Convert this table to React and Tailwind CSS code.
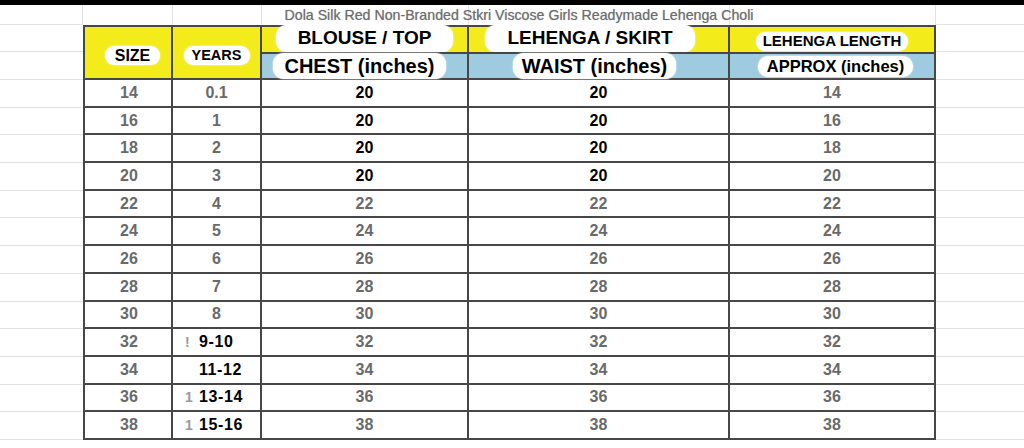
import React from "react";

const rows = [
  ["14", "0.1", "20", "20", "14"],
  ["16", "1", "20", "20", "16"],
  ["18", "2", "20", "20", "18"],
  ["20", "3", "20", "20", "20"],
  ["22", "4", "22", "22", "22"],
  ["24", "5", "24", "24", "24"],
  ["26", "6", "26", "26", "26"],
  ["28", "7", "28", "28", "28"],
  ["30", "8", "30", "30", "30"],
  ["32", "9-10", "32", "32", "32"],
  ["34", "11-12", "34", "34", "34"],
  ["36", "13-14", "36", "36", "36"],
  ["38", "15-16", "38", "38", "38"],
];

const gray = "text-[16px] font-bold text-[#6a6a6a]";
const black = "text-[16px] font-bold text-black";

function YearsCell({ v, i }) {
  if (i < 9) {
    return <span className={gray}>{v}</span>;
  }
  const rem = i === 9 ? "!" : i === 10 ? "" : "1";
  return (
    <div className="flex h-full w-full items-center pl-[12px]">
      <span className="w-[10px] text-[14px] font-bold text-[#9a9a9a]">{rem}</span>
      <span className="flex h-[21px] items-center rounded-[9px] bg-white px-[4px] text-[16px] font-bold tracking-[0.6px] text-black shadow-[0_0_2px_#fff]">
        {v}
      </span>
    </div>
  );
}

function DataRow({ r, i }) {
  const cell = "flex h-full items-center justify-center border-r-2 border-b-2 border-[#474747]";
  const boldRow = i < 4;
  return (
    <div className="flex h-[27.7px]">
      <div className="w-[83px] border-b border-[#e3e3e3]" />
      <div className={`${cell} w-[90px] border-l-2 pl-[2px]`}>
        <span className={gray}>{r[0]}</span>
      </div>
      <div className={`${cell} w-[89px]`}>
        <YearsCell v={r[1]} i={i} />
      </div>
      <div className={`${cell} w-[207px]`}>
        <span className={boldRow ? black : gray}>{r[2]}</span>
      </div>
      <div className={`${cell} w-[261px]`}>
        <span className={boldRow ? black : gray}>{r[3]}</span>
      </div>
      <div className={`${cell} w-[206px]`}>
        <span className={gray}>{r[4]}</span>
      </div>
      <div className="flex-1 border-b border-[#e3e3e3]" />
    </div>
  );
}

export default function App() {
  const light = "h-full border-r border-[#e3e3e3]";
  const yellow = "bg-[#f3ec1a]";
  const blue = "bg-[#9ecbdf]";
  const pill = "flex items-center justify-center rounded-[11px] bg-white font-bold text-black shadow-[0_0_2px_#fff]";
  return (
    <div
      className="h-[448px] w-[1024px] overflow-hidden bg-white"
      style={{ fontFamily: '"Liberation Sans", Arial, sans-serif' }}
    >
      <div className="h-[5px] bg-black" />
      {/* title row */}
      <div className="relative flex h-[20px]">
        <div className={`${light} w-[83px] border-b`} />
        <div className={`${light} w-[90px]`} />
        <div className={`${light} w-[89px]`} />
        <div className={`${light} w-[207px]`} />
        <div className={`${light} w-[261px]`} />
        <div className={`${light} w-[206px]`} />
        <div className="h-full flex-1 border-b border-[#e3e3e3]" />
        <div className="absolute left-0 top-[0px] flex w-full justify-center pl-[14px]">
          <span className="text-[14.2px] leading-[20px] text-[#6e6e6e] [text-shadow:0_0_1px_#aaa]">
            Dola Silk Red Non-Branded Stkri Viscose Girls Readymade Lehenga Choli
          </span>
        </div>
      </div>
      {/* header */}
      <div className="flex h-[55px]">
        <div className="flex w-[83px] flex-col">
          <div className="h-[27px] border-b border-[#e3e3e3]" />
          <div className="h-[28px] border-b border-[#e3e3e3]" />
        </div>
        <div className={`flex w-[90px] items-center justify-center border-2 border-[#474747] pt-[6px] pl-[9px] ${yellow}`}>
          <span className={`${pill} h-[19px] w-[55px] rounded-[8px] text-[16px]`}>SIZE</span>
        </div>
        <div className={`flex w-[89px] items-center justify-center border-y-2 border-r-2 border-[#474747] pt-[6px] ${yellow}`}>
          <span className={`${pill} h-[19px] w-[66px] rounded-[8px] text-[14.5px]`}>YEARS</span>
        </div>
        <div className="flex w-[207px] flex-col border-y-2 border-r-2 border-[#474747]">
          <div className={`flex h-[25px] items-start pl-[14px] ${yellow}`}>
            <span className={`${pill} -mt-[2px] h-[27px] w-[177px] text-[19px]`}>BLOUSE / TOP</span>
          </div>
          <div className={`flex h-[26px] items-center border-t-2 border-[#474747] pl-[11px] ${blue}`}>
            <span className={`${pill} h-[26px] w-[173px] text-[20px]`}>CHEST (inches)</span>
          </div>
        </div>
        <div className="flex w-[261px] flex-col border-y-2 border-r-2 border-[#474747]">
          <div className={`flex h-[25px] items-start pl-[16px] ${yellow}`}>
            <span className={`${pill} -mt-[2px] h-[27px] w-[210px] text-[19px]`}>LEHENGA / SKIRT</span>
          </div>
          <div className={`flex h-[26px] items-center border-t-2 border-[#474747] pl-[44px] ${blue}`}>
            <span className={`${pill} h-[26px] w-[163px] text-[20px]`}>WAIST (inches)</span>
          </div>
        </div>
        <div className="flex w-[206px] flex-col border-y-2 border-r-2 border-[#474747]">
          <div className={`flex h-[25px] items-center pl-[26px] pt-[3px] ${yellow}`}>
            <span className={`${pill} h-[19px] w-[152px] rounded-[9px] text-[15px]`}>LEHENGA LENGTH</span>
          </div>
          <div className={`flex h-[26px] items-center border-t-2 border-[#474747] pl-[28px] ${blue}`}>
            <span className={`${pill} h-[21px] w-[155px] rounded-[9px] text-[16.5px]`}>APPROX (inches)</span>
          </div>
        </div>
        <div className="flex flex-1 flex-col">
          <div className="h-[27px] border-b border-[#e3e3e3]" />
          <div className="h-[28px] border-b border-[#e3e3e3]" />
        </div>
      </div>
      {rows.map((r, i) => (
        <DataRow key={i} r={r} i={i} />
      ))}
    </div>
  );
}
